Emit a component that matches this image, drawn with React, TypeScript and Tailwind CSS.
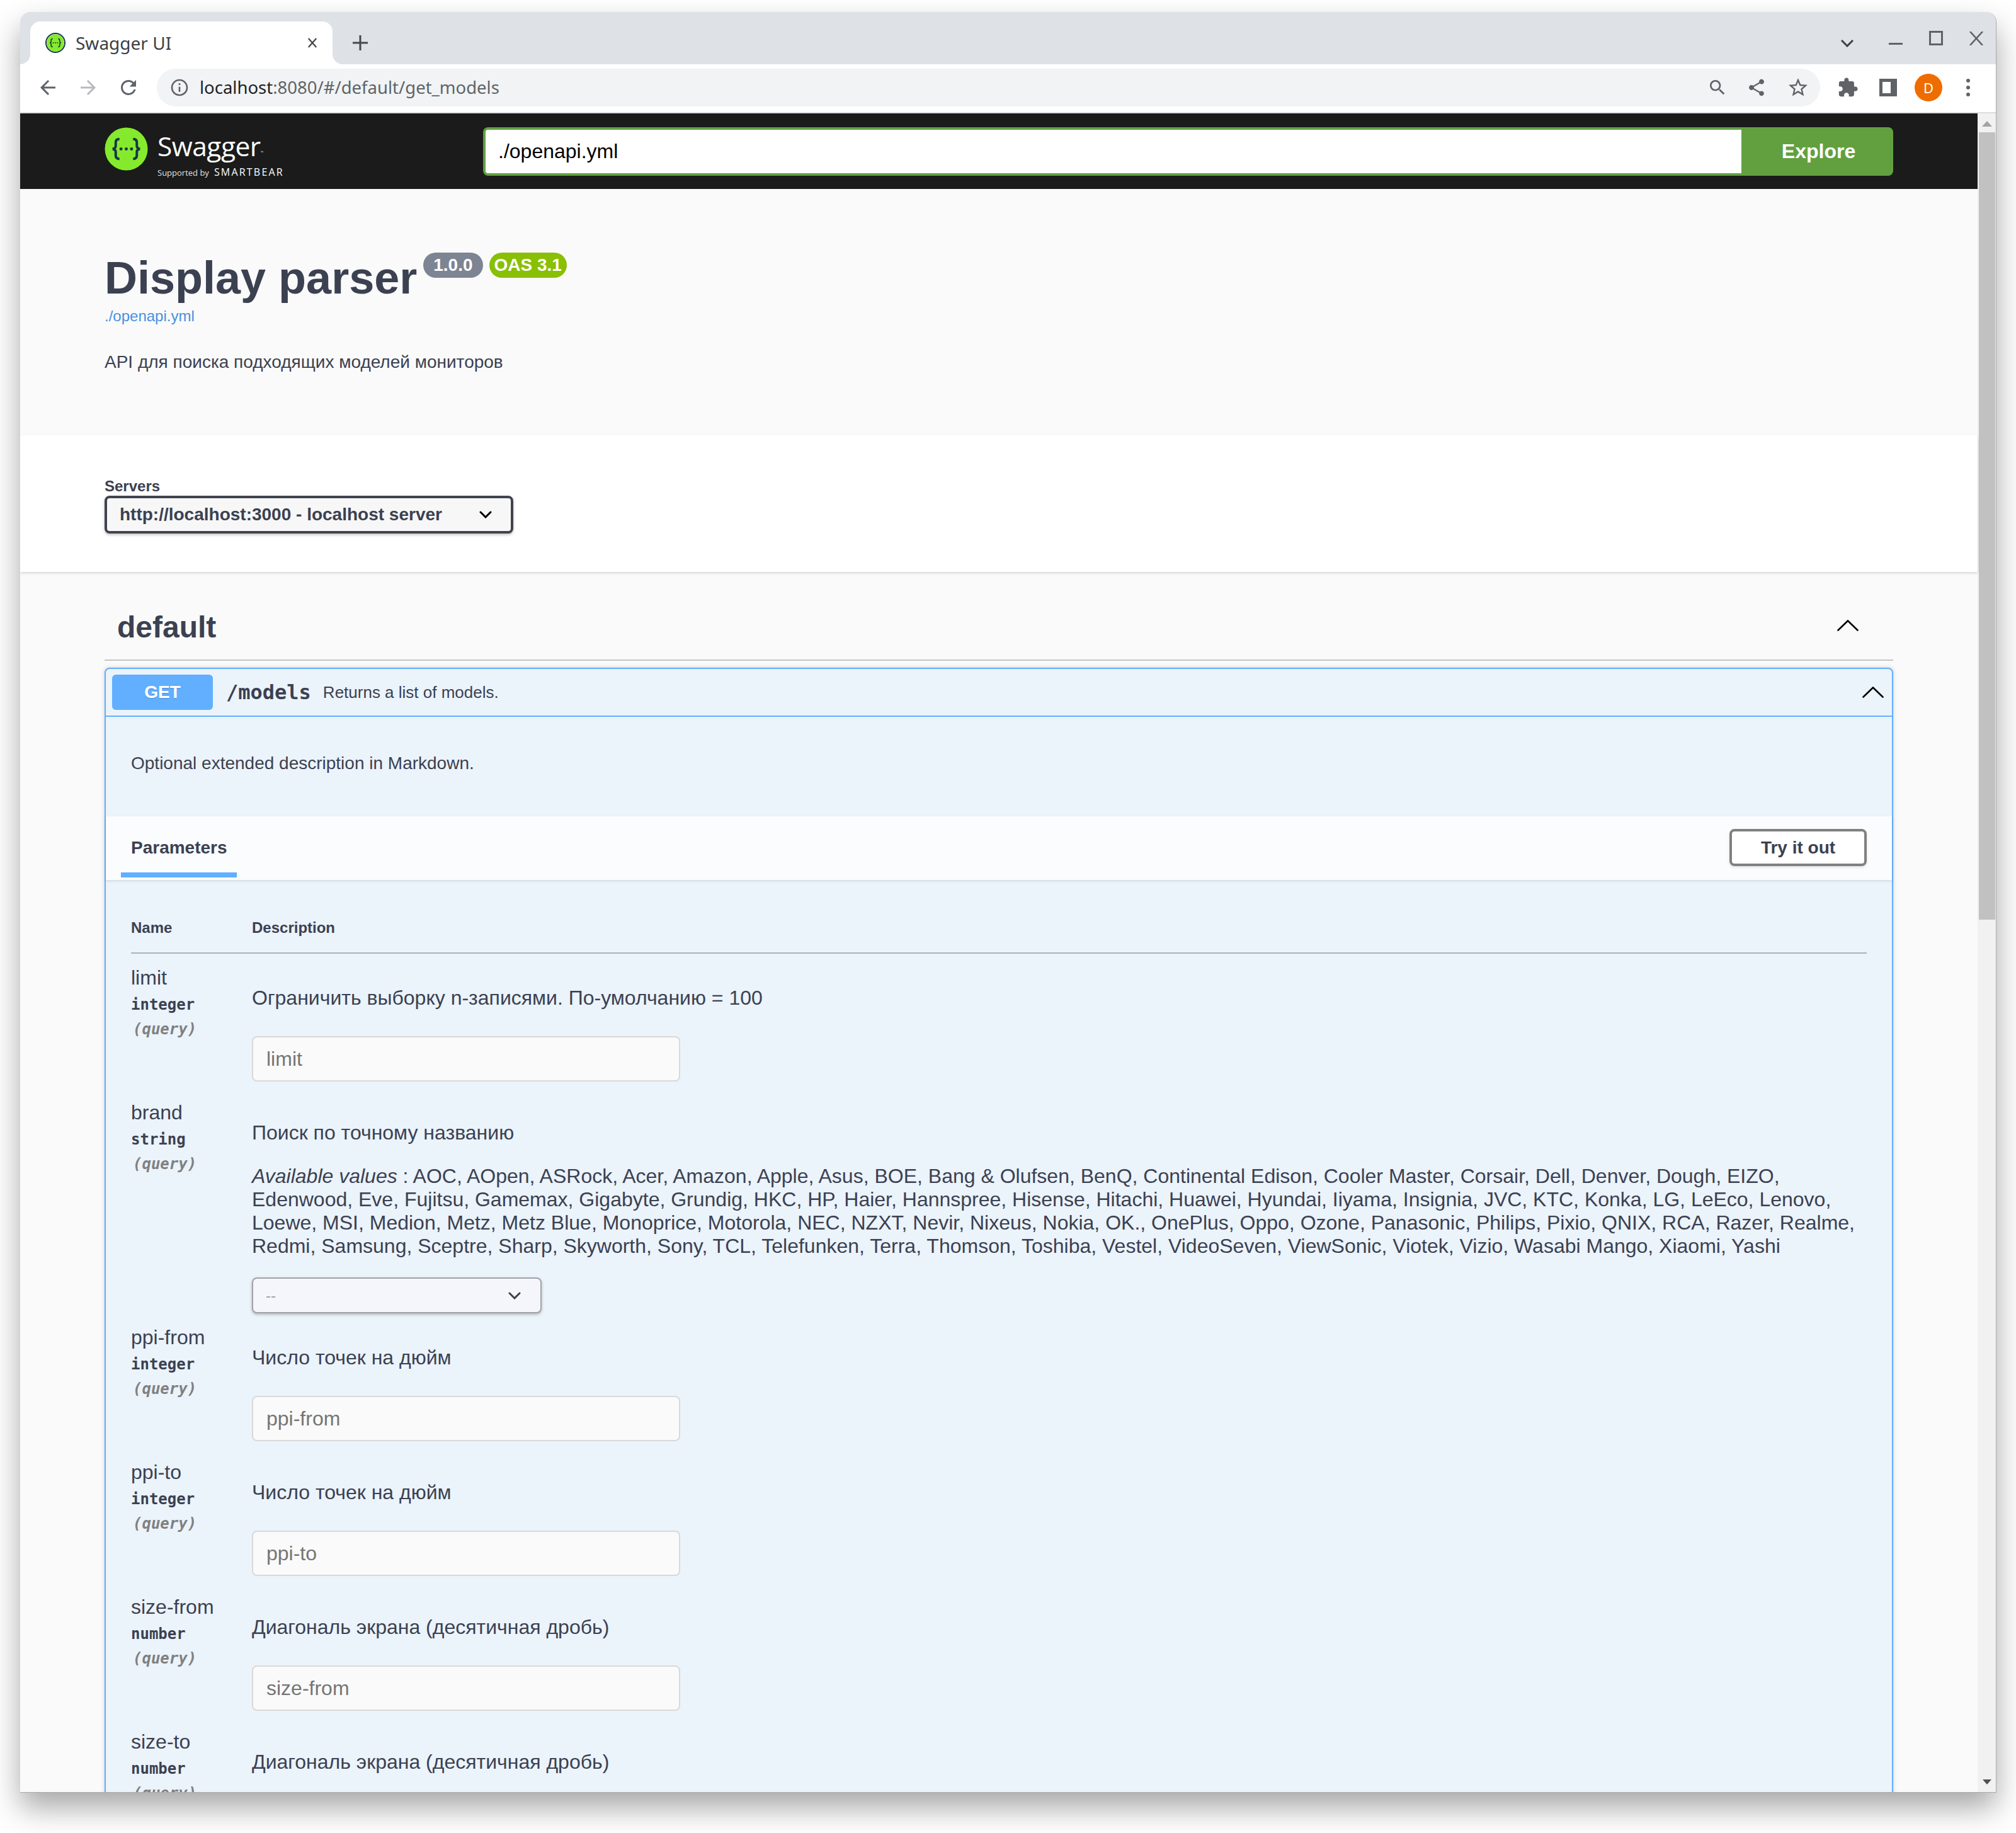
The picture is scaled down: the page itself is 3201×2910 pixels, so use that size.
const SANS = 'font-["Liberation_Sans",Arial,sans-serif]'
const AVAILABLE =
  'AOC, AOpen, ASRock, Acer, Amazon, Apple, Asus, BOE, Bang & Olufsen, BenQ, Continental Edison, Cooler Master, Corsair, Dell, Denver, Dough, EIZO, Edenwood, Eve, Fujitsu, Gamemax, Gigabyte, Grundig, HKC, HP, Haier, Hannspree, Hisense, Hitachi, Huawei, Hyundai, Iiyama, Insignia, JVC, KTC, Konka, LG, LeEco, Lenovo, Loewe, MSI, Medion, Metz, Metz Blue, Monoprice, Motorola, NEC, NZXT, Nevir, Nixeus, Nokia, OK., OnePlus, Oppo, Ozone, Panasonic, Philips, Pixio, QNIX, RCA, Razer, Realme, Redmi, Samsung, Sceptre, Sharp, Skyworth, Sony, TCL, Telefunken, Terra, Thomson, Toshiba, Vestel, VideoSeven, ViewSonic, Viotek, Vizio, Wasabi Mango, Xiaomi, Yashi'

const PARAMS = [
  { name: 'limit', type: 'integer', desc: 'Ограничить выборку n-записями. По-умолчанию = 100' },
  { name: 'brand', type: 'string', desc: 'Поиск по точному названию', values: AVAILABLE },
  { name: 'ppi-from', type: 'integer', desc: 'Число точек на дюйм' },
  { name: 'ppi-to', type: 'integer', desc: 'Число точек на дюйм' },
  { name: 'size-from', type: 'number', desc: 'Диагональ экрана (десятичная дробь)' },
  { name: 'size-to', type: 'number', desc: 'Диагональ экрана (десятичная дробь)' },
]

function Icon({ d, className }: { d: string; className: string }) {
  return (
    <svg viewBox="0 0 24 24" fill="currentColor" className={className}>
      <path d={d} />
    </svg>
  )
}

function Chevron({ className }: { className: string }) {
  return (
    <svg viewBox="0 0 34 18" fill="none" stroke="currentColor" strokeWidth="2.6" strokeLinecap="round" className={className}>
      <path d="M1.5 16.5 17 1.5l15.5 15" />
    </svg>
  )
}

function SelectArrow({ className }: { className: string }) {
  return (
    <svg viewBox="0 0 20 12" fill="none" stroke="currentColor" strokeWidth="3" strokeLinecap="round" className={className}>
      <path d="M2 2l8 8 8-8" />
    </svg>
  )
}

function SwaggerMark({ className }: { className: string }) {
  return (
    <svg viewBox="0 0 70 70" className={className}>
      <circle cx="35" cy="35" r="34.5" fill="#85ea2d" />
      <path
        d="M24 19c-4.500 0-6 2-6 5.500v5.500c0 2.500-1.500 4.500-5 5 3.500.5 5 2.500 5 5v5.500c0 3.500 1.500 5.500 6 5.500M46 19c4.500 0 6 2 6 5.500v5.500c0 2.500 1.500 4.500 5 5-3.500.5-5 2.500-5 5v5.500c0 3.500-1.500 5.500-6 5.500"
        fill="none"
        stroke="#173647"
        strokeWidth="4"
      />
      <circle cx="26.500" cy="35" r="2.500" fill="#173647" />
      <circle cx="35" cy="35" r="2.500" fill="#173647" />
      <circle cx="43.500" cy="35" r="2.500" fill="#173647" />
    </svg>
  )
}

function TabStrip() {
  return (
    <div className="flex h-[83px] shrink-0 items-start bg-[#dee1e6]">
      <div className="relative mt-[15px] ml-[16px] flex h-[68px] w-[480px] items-center rounded-t-[16px] bg-white pl-[24px] font-['Noto_Sans',sans-serif] text-[28px] text-[#3c4043]">
        <span className="absolute bottom-0 -left-[16px] h-[16px] w-[16px] bg-white">
          <span className="block h-full w-full rounded-br-[16px] bg-[#dee1e6]" />
        </span>
        <span className="absolute -right-[16px] bottom-0 h-[16px] w-[16px] bg-white">
          <span className="block h-full w-full rounded-bl-[16px] bg-[#dee1e6]" />
        </span>
        <SwaggerMark className="h-[32px] w-[32px] rounded-full border-2 border-[#173647]" />
        <span className="ml-[16px]">Swagger UI</span>
        <svg viewBox="0 0 18 18" stroke="#45484c" strokeWidth="2.6" className="mr-[23px] ml-auto h-[16px] w-[18px]">
          <path d="M2 1l14 16M16 1 2 17" />
        </svg>
      </div>
      <svg viewBox="0 0 24 24" stroke="#45484c" strokeWidth="3" className="mt-[37px] ml-[32px] h-[24px] w-[24px]">
        <path d="M12 0v24M0 12h24" />
      </svg>
      <div className="ml-auto flex items-start">
        <svg viewBox="0 0 20 12" fill="none" stroke="#3c4043" strokeWidth="3" className="mt-[44px] h-[12px] w-[20px]">
          <path d="M1 1l9 9 9-9" />
        </svg>
        <span className="mt-[49px] ml-[56px] h-[3px] w-[22px] bg-[#5f6368]" />
        <span className="mt-[30px] ml-[42px] h-[23px] w-[22px] border-[3px] border-[#5f6368]" />
        <svg viewBox="0 0 22 22" stroke="#5f6368" strokeWidth="2.6" className="mt-[31px] mr-[20px] ml-[42px] h-[22px] w-[22px]">
          <path d="M1 0l20 22M21 0 1 22" />
        </svg>
      </div>
    </div>
  )
}

function Toolbar() {
  return (
    <div className="flex h-[78px] shrink-0 items-center border-b-2 border-[#dadce0] bg-white pb-[2px]">
      <Icon
        d="M20 11H7.830l5.590-5.590L12 4l-8 8 8 8 1.410-1.410L7.830 13H20v-2z"
        className="ml-[26px] h-[36px] w-[36px] text-[#5f6368]"
      />
      <Icon
        d="M12 4l-1.410 1.410L16.170 11H4v2h12.170l-5.580 5.590L12 20l8-8z"
        className="ml-[28px] h-[36px] w-[36px] text-[#b8babd]"
      />
      <Icon
        d="M17.650 6.350C16.200 4.900 14.210 4 12 4c-4.420 0-7.990 3.580-7.990 8s3.570 8 7.990 8c3.730 0 6.840-2.550 7.730-6h-2.080c-.82 2.330-3.040 4-5.650 4-3.310 0-6-2.690-6-6s2.690-6 6-6c1.660 0 3.140.69 4.220 1.780L13 11h7V4l-2.350 2.350z"
        className="ml-[28px] h-[36px] w-[36px] text-[#5f6368]"
      />
      <div className="ml-[27px] flex h-[60px] w-[2641px] items-center rounded-full bg-[#f1f3f4] pl-[20px] font-['Noto_Sans',sans-serif] text-[27.5px]">
        <Icon
          d="M11 7h2v2h-2zm0 4h2v6h-2zm1-9C6.480 2 2 6.480 2 12s4.480 10 10 10 10-4.480 10-10S17.520 2 12 2zm0 18c-4.410 0-8-3.590-8-8s3.590-8 8-8 8 3.590 8 8-3.590 8-8 8z"
          className="h-[32px] w-[32px] text-[#5f6368]"
        />
        <span className="ml-[16px] text-[#202124]">localhost</span>
        <span className="text-[#5f6368]">:8080/#/default/get_models</span>
        <Icon
          d="M15.500 14h-.79l-.28-.27C15.410 12.590 16 11.110 16 9.500 16 5.910 13.090 3 9.500 3S3 5.910 3 9.500 5.910 16 9.500 16c1.610 0 3.090-.59 4.230-1.570l.27.28v.79l5 4.990L20.490 19l-4.990-5zm-6 0C7.010 14 5 11.990 5 9.500S7.010 5 9.500 5 14 7.010 14 9.500 11.990 14 9.500 14z"
          className="ml-auto h-[32px] w-[32px] text-[#5f6368]"
        />
        <Icon
          d="M18 16.080c-.76 0-1.440.3-1.960.77L8.910 12.700c.05-.23.09-.46.09-.7s-.04-.47-.09-.7l7.050-4.110c.54.5 1.250.81 2.040.81 1.660 0 3-1.340 3-3s-1.340-3-3-3-3 1.340-3 3c0 .24.04.47.09.7L8.040 9.810C7.500 9.310 6.790 9 6 9c-1.660 0-3 1.340-3 3s1.340 3 3 3c.79 0 1.500-.31 2.040-.81l7.120 4.160c-.05.21-.08.43-.08.65 0 1.610 1.310 2.920 2.920 2.920s2.920-1.310 2.920-2.920-1.310-2.920-2.920-2.920z"
          className="ml-[30px] h-[32px] w-[32px] text-[#5f6368]"
        />
        <Icon
          d="M22 9.240l-7.190-.62L12 2 9.190 8.630 2 9.240l5.460 4.730L5.820 21 12 17.270 18.180 21l-1.630-7.030L22 9.240zM12 15.400l-3.760 2.270 1-4.280-3.320-2.880 4.380-.38L12 6.100l1.710 4.040 4.380.38-3.320 2.880 1 4.280L12 15.400z"
          className="mr-[17px] ml-[32px] h-[36px] w-[36px] text-[#5f6368]"
        />
      </div>
      <Icon
        d="M20.500 11H19V7c0-1.100-.9-2-2-2h-4V3.500C13 2.120 11.880 1 10.500 1S8 2.120 8 3.500V5H4c-1.100 0-1.990.9-1.990 2v3.800H3.500c1.490 0 2.700 1.210 2.700 2.700s-1.210 2.700-2.700 2.700H2V20c0 1.100.9 2 2 2h3.800v-1.500c0-1.490 1.210-2.700 2.700-2.700 1.490 0 2.700 1.210 2.700 2.700V22H17c1.100 0 2-.9 2-2v-4h1.500c1.380 0 2.500-1.120 2.500-2.500S21.880 11 20.500 11z"
        className="ml-[27px] h-[34px] w-[34px] text-[#5f6368]"
      />
      <span className="ml-[33px] h-[28px] w-[28px] border-y-[5px] border-r-[10px] border-l-[5px] border-[#5f6368]" />
      <span className="ml-[28px] flex h-[44px] w-[44px] items-center justify-center rounded-full bg-[#ee6c00] font-['Noto_Sans',sans-serif] text-[22px] text-white">
        D
      </span>
      <div className="ml-[38px] flex flex-col gap-[5px]">
        <span className="h-[6px] w-[6px] rounded-full bg-[#5f6368]" />
        <span className="h-[6px] w-[6px] rounded-full bg-[#5f6368]" />
        <span className="h-[6px] w-[6px] rounded-full bg-[#5f6368]" />
      </div>
    </div>
  )
}

function TopBar() {
  return (
    <div className="flex h-[120px] items-center bg-[#1b1b1b] pr-[134px] pl-[134px]">
      <SwaggerMark className="-mt-[8px] h-[69px] w-[69px] shrink-0" />
      <div className="mt-[10px] ml-[15px] flex w-[517px] flex-col text-white">
        <span className="font-['Open_Sans',sans-serif] text-[42.5px] leading-[50px] tracking-[-0.5px]">
          Swagger<span className="align-[4px] text-[6px] text-[#cfcfcf]">™</span>
        </span>
        <span className="-mt-[3px] flex items-baseline font-['Open_Sans',sans-serif] leading-[18px]">
          <span className="text-[13px] text-[#e0e0e0]">Supported by</span>
          <span className="ml-[8px] text-[16px] tracking-[2.2px]">SMARTBEAR</span>
        </span>
      </div>
      <div className="flex h-[77px] flex-1 items-center rounded-l-[8px] border-4 border-r-0 border-[#62a03f] bg-white pl-[20px] text-[32px] text-black">
        ./openapi.yml
      </div>
      <div className="flex h-[77px] w-[241px] items-center justify-center rounded-r-[8px] bg-[#62a03f] pl-[4px] text-[32px] font-bold text-white">
        Explore
      </div>
    </div>
  )
}

function Info() {
  return (
    <div className="h-[391px] px-[134px] pt-[97px] text-[#3b4151]">
      <div className="flex h-[80px] items-start">
        <h1 className="pt-[4px] text-[72px] leading-[80px] font-bold">Display parser</h1>
        <span className="mt-[4px] ml-[10px] flex h-[40px] items-center rounded-[20px] bg-[#7d8492] px-[16px] text-[28px] font-bold text-white">
          1.0.0
        </span>
        <span className="mt-[4px] ml-[10px] flex h-[40px] items-center rounded-[20px] bg-[#89bf04] px-[8px] text-[28px] font-bold text-white">
          OAS 3.1
        </span>
      </div>
      <div className="mt-[8px] text-[24px] leading-[34px] text-[#4990e2]">./openapi.yml</div>
      <p className="mt-[38px] text-[28px] leading-[36px]">API для поиска подходящих моделей мониторов</p>
    </div>
  )
}

function Servers() {
  return (
    <div className="relative h-[217px] bg-white px-[134px] pt-[66px] shadow-[0_2px_4px_rgba(0,0,0,0.15)]">
      <div className="text-[24px] leading-[30px] font-bold text-[#3b4151]">Servers</div>
      <div className="flex h-[60px] w-[649px] items-center rounded-[8px] border-4 border-[#41444e] bg-[#f7f7f7] pr-[30px] pl-[20px] text-[28px] font-bold text-[#3b4151] shadow-[0_2px_4px_rgba(0,0,0,0.25)]">
        http://localhost:3000 - localhost server
        <SelectArrow className="ml-auto h-[12px] w-[20px] text-black" />
      </div>
    </div>
  )
}

function ParamRow({ name, type, desc, values }: { name: string; type: string; desc: string; values?: string }) {
  return (
    <div className={values ? 'flex h-[357px]' : 'flex h-[214px]'}>
      <div className="w-[192px] shrink-0 pt-[18px]">
        <div className="h-[40px] text-[32px] leading-[40px]">{name}</div>
        <div className="mt-[8px] font-['DejaVu_Sans_Mono','Liberation_Mono',monospace] text-[24px] leading-[30px] font-bold">
          {type}
        </div>
        <div className="mt-[9px] pl-[3px] font-['DejaVu_Sans_Mono','Liberation_Mono',monospace] text-[24px] leading-[30px] font-semibold text-[#808080] italic">
          (query)
        </div>
      </div>
      <div className="flex-1 pt-[50px]">
        <p className="text-[32px] leading-[40px]">{desc}</p>
        {values ? (
          <>
            <p className="mt-[31px] text-[32px] leading-[37px]">
              <i>Available values</i> : {values}
            </p>
            <div className="mt-[31px] flex h-[57px] w-[460px] items-center rounded-[8px] border-2 border-[#a2a3a7] bg-[#f5f6fb] pr-[31px] pl-[20px] text-[24px] text-[#a0a1a5] shadow-[0_2px_4px_rgba(0,0,0,0.25)]">
              --
              <SelectArrow className="ml-auto h-[12px] w-[20px] text-[#3b4151]" />
            </div>
          </>
        ) : (
          <div className="mt-[41px] flex h-[72px] w-[680px] items-center rounded-[8px] border-2 border-[#d9d9d9] bg-[#fafafa] pl-[21px] text-[32px] text-[#757575]">
            {name}
          </div>
        )}
      </div>
    </div>
  )
}

function Operation() {
  return (
    <div className="mt-[11px] rounded-[8px] border-2 border-[#61affe] bg-[#ebf3fb] text-[#3b4151] shadow-[0_0_6px_rgba(0,0,0,0.19)]">
      <div className="flex h-[76px] items-center border-b-2 border-[#61affe] pr-[13px] pl-[10px]">
        <span className="flex h-[56px] w-[160px] items-center justify-center rounded-[6px] bg-[#61affe] text-[28px] font-bold text-white [text-shadow:0_2px_0_rgba(0,0,0,0.1)]">
          GET
        </span>
        <span className="ml-[21px] font-['DejaVu_Sans_Mono','Liberation_Mono',monospace] text-[32px] font-semibold">/models</span>
        <span className="ml-[19px] text-[26px]">Returns a list of models.</span>
        <Chevron className="ml-auto h-[18px] w-[34px] text-black" />
      </div>
      <div className="h-[158px] pt-[56px] pl-[40px] text-[28px] leading-[36px]">Optional extended description in Markdown.</div>
      <div className="relative flex h-[101px] items-center justify-between bg-[#fbfcfe] pr-[40px] pl-[40px] shadow-[0_2px_4px_rgba(0,0,0,0.1)]">
        <div className="relative -mt-[2px] text-[28px] font-bold">
          Parameters
          <span className="absolute top-[60px] -right-[15px] -left-[16px] h-[8px] bg-[#61affe]" />
        </div>
        <div className="mt-[-2px] flex h-[59px] w-[218px] items-center justify-center rounded-[8px] border-4 border-[#808080] bg-white text-[28px] font-bold shadow-[0_2px_4px_rgba(0,0,0,0.1)]">
          Try it out
        </div>
      </div>
      <div className="px-[40px] pt-[56px]">
        <div className="flex h-[61px] border-b-2 border-[#a9b1bf] text-[24px] leading-[40px] font-bold">
          <span className="w-[192px]">Name</span>
          <span>Description</span>
        </div>
        {PARAMS.map((p) => (
          <ParamRow key={p.name} {...p} />
        ))}
      </div>
    </div>
  )
}

function Scrollbar() {
  return (
    <div className="flex w-[29px] shrink-0 flex-col items-center bg-[#f1f1f1]">
      <span className="mt-[12px] h-0 w-0 border-x-[8px] border-b-[9px] border-x-transparent border-b-[#a3a3a3]" />
      <span className="mt-[9px] h-[1250px] w-[26px] bg-[#c1c1c1]" />
      <span className="mt-auto mb-[12px] h-0 w-0 border-x-[7px] border-t-[8px] border-x-transparent border-t-[#505050]" />
    </div>
  )
}

export default function App() {
  return (
    <div className={`h-[2910px] w-[3201px] bg-white pt-[19px] pl-[32px] ${SANS}`}>
      <div className="flex h-[2827px] w-[3138px] flex-col overflow-hidden rounded-t-[16px] border-r border-b border-[#aaaaaa] shadow-[0_24px_48px_rgba(0,0,0,0.35)]">
        <TabStrip />
        <Toolbar />
        <div className="flex min-h-0 flex-1 overflow-hidden">
          <div className="min-w-0 flex-1 bg-[#fafafa]">
            <TopBar />
            <Info />
            <Servers />
            <div className="pr-[134px] pl-[134px]">
              <div className="flex h-[141px] items-center border-b-2 border-[#c4c5ca] pt-[34px] pr-[55px] pl-[20px] text-[#3b4151]">
                <span className="mt-[2px] text-[48px] font-bold">default</span>
                <Chevron className="ml-auto -mt-[4px] h-[18px] w-[34px] text-black" />
              </div>
              <Operation />
            </div>
          </div>
          <Scrollbar />
        </div>
      </div>
    </div>
  )
}
